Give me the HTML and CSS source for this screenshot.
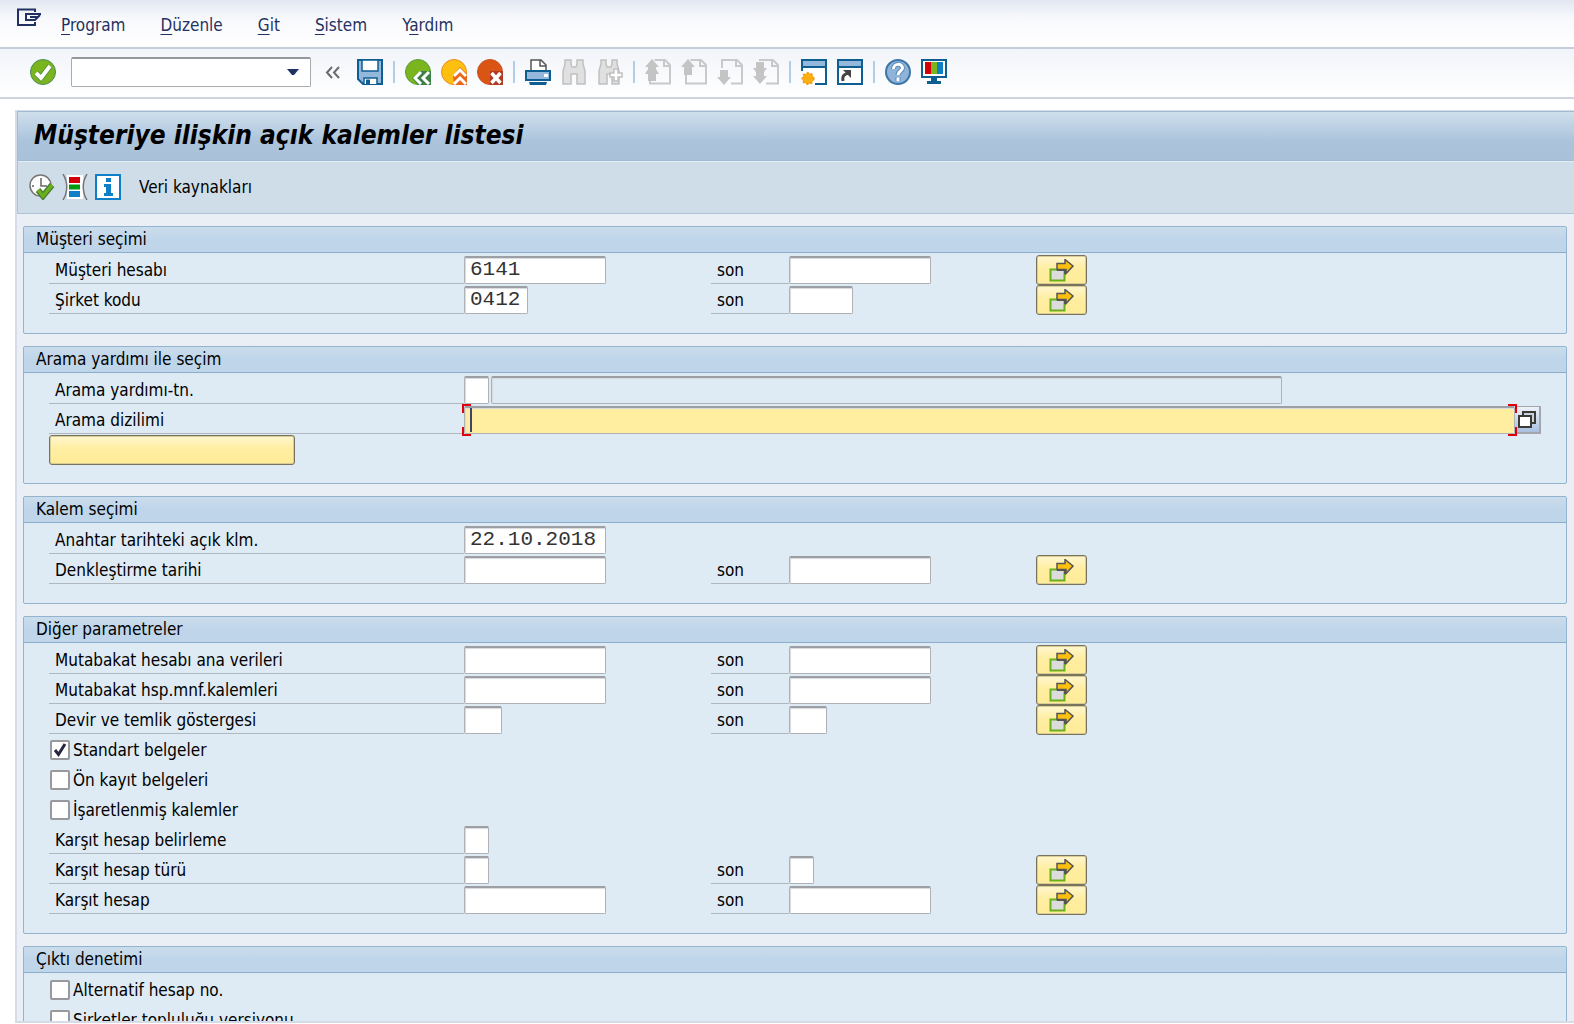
FILE: index.html
```html
<!DOCTYPE html>
<html lang="tr">
<head>
<meta charset="utf-8">
<title>Müşteriye ilişkin açık kalemler listesi</title>
<link rel="stylesheet" href="styles.css">
</head>
<body>
<svg class="defs" aria-hidden="true">
  <symbol id="i-multi" viewBox="0 0 26 24">
    <rect x="1.5" y="10.5" width="14" height="11" fill="#dcdcdc" stroke="#69b11b" stroke-width="2"/>
    <path d="M8 5h8V1l8 6.500-7 7.500v-4H8z" fill="#fcc10f" stroke="#555" stroke-width="1.500" transform="translate(0 -.5)"/>
    <path d="M8 11h8v4" fill="none" stroke="#555" stroke-width="2"/>
  </symbol>
  <symbol id="i-page" viewBox="0 0 26 26">
    <path d="M9.500 1H20l5 5v18.500H5V13" fill="none" stroke="#c9c9c9" stroke-width="2"/>
    <path d="M19 1v6h6" fill="none" stroke="#c9c9c9" stroke-width="2"/>
  </symbol>
</svg>

<nav class="menubar">
  <svg class="menu-logo" viewBox="0 0 24 20" width="24" height="20" fill="none" stroke="#1f3263" stroke-width="2"><path d="M18 4V1.500H1V17h17v-3M9 6h15M9 5v7h9l5-5M13 9h8"/></svg>
  <a href="#"><u>P</u>rogram</a>
  <a href="#"><u>D</u>üzenle</a>
  <a href="#"><u>G</u>it</a>
  <a href="#"><u>S</u>istem</a>
  <a href="#">Y<u>a</u>rdım</a>
</nav>

<div class="toolbar">
  <button class="tool tool-enter" aria-label="Devam">
    <svg viewBox="0 0 26 26"><circle cx="13" cy="13" r="12.500" fill="#7ab51d" stroke="#4b8a55"/><path d="M6 14l5 5L20 7" fill="none" stroke="#4b8a35" stroke-width="5.500"/><path d="M6 14l5 5L20 7" fill="none" stroke="#fff" stroke-width="4"/></svg>
  </button>
  <div class="command">
    <input type="text" aria-label="Komut alanı">
    <button aria-label="Komut listesi"><svg viewBox="0 0 12 7" width="12" height="7"><path d="M0 0h12L7 6H5z" fill="#1f3263"/></svg></button>
  </div>
  <button class="tool" aria-label="Daralt">
    <svg viewBox="0 0 26 26" fill="none" stroke="#6b6b6b" stroke-width="2"><path d="M11 8l-5 5.500 5 5.500M18 8l-5 5.500 5 5.500"/></svg>
  </button>
  <button class="tool" aria-label="Kaydet">
    <svg viewBox="0 0 26 26"><path d="M1 1h24v24H6l-5-5z" fill="#94b8dc" stroke="#0f5e92" stroke-width="2"/><path d="M5 1h16v11H5z" fill="#fff" stroke="#0f5e92" stroke-width="1.500"/><path d="M7 25v-6h13v6" fill="#fff" stroke="#0f5e92" stroke-width="1.500"/><path d="M9 20.500h4V25H9z" fill="#0f5e92"/></svg>
  </button>
  <span class="sep"></span>
  <button class="tool" aria-label="Geri">
    <svg viewBox="0 0 26 26"><circle cx="13" cy="13" r="12.500" fill="#7ab51d" stroke="#5b9a3c"/><path d="M15 12h11v14H13L7 19z" fill="#3f8046"/><path d="M16 13l-6 6 6 6M24 13l-6 6 6 6" fill="none" stroke="#fff" stroke-width="3"/></svg>
  </button>
  <button class="tool" aria-label="Çıkış">
    <svg viewBox="0 0 26 26"><circle cx="13" cy="13" r="12.500" fill="#fdc010" stroke="#ee8a1c"/><path d="M12 16l7-8 7 7v11H13z" fill="#e8681b"/><path d="M13 17l6-6 6 6M13 25l6-6 6 6" fill="none" stroke="#fff" stroke-width="3"/></svg>
  </button>
  <button class="tool" aria-label="İptal">
    <svg viewBox="0 0 26 26"><circle cx="13" cy="13" r="12.500" fill="#da5513" stroke="#c9501f"/><path d="M13 12h13v14H13z" fill="#b03a22"/><path d="M14.500 14l9 10M23.500 14l-9 10" stroke="#fff" stroke-width="3.500"/></svg>
  </button>
  <span class="sep"></span>
  <button class="tool" aria-label="Yazdır">
    <svg viewBox="0 0 26 26"><path d="M6 11V1h10l5 5v5" fill="#fff" stroke="#555" stroke-width="1.500"/><path d="M15 1v6h6" fill="none" stroke="#555" stroke-width="1.500"/><rect x="1" y="12" width="24" height="9" fill="#94b8dc" stroke="#0f5e92" stroke-width="2"/><rect x="19" y="15" width="4" height="3" fill="#fff"/><path d="M4 23h18l-1 3H5z" fill="#0f5e92"/></svg>
  </button>
  <button class="tool" aria-label="Bul" disabled>
    <svg viewBox="0 0 26 26" fill="#e0e0e0" stroke="#c0c0c0" stroke-width="1.500"><path d="M4 1h6v4l1 3h4l1-3V1h6v4l2 7v13h-8V15h-6v10H2V12l2-7z"/></svg>
  </button>
  <button class="tool" aria-label="Devamını bul" disabled>
    <svg viewBox="0 0 26 26" fill="#e0e0e0" stroke="#c0c0c0" stroke-width="1.500"><path d="M4 1h5v4l1 3h4l1-3V1h5v4l2 7v13h-7V15h-5v10H2V12l2-7z"/><path d="M17 10h4v4h4v4h-4v4h-4v-4h-4v-4h4z" fill="#fff"/></svg>
  </button>
  <span class="sep"></span>
  <button class="tool" aria-label="İlk sayfa" disabled>
    <svg viewBox="0 0 26 26"><use href="#i-page"/><path d="M7 0l7 8h-3v2l3 5h-3v7H3v-7H0l3-5V8H0z" fill="#c4c4c4"/></svg>
  </button>
  <button class="tool" aria-label="Önceki sayfa" disabled>
    <svg viewBox="0 0 26 26"><use href="#i-page"/><path d="M7 0l7 8h-3v8H3V8H0z" fill="#c4c4c4"/></svg>
  </button>
  <button class="tool" aria-label="Sonraki sayfa" disabled>
    <svg viewBox="0 0 26 26"><path d="M5 9V1h15l5 5v18.500H14M19 1v6h6" fill="none" stroke="#c9c9c9" stroke-width="2"/><path d="M3 11h8v7h3l-7 8-7-8h3z" fill="#c4c4c4"/></svg>
  </button>
  <button class="tool" aria-label="Son sayfa" disabled>
    <svg viewBox="0 0 26 26"><path d="M6 1h14l5 5v18.500H13M19 1v6h6" fill="none" stroke="#c9c9c9" stroke-width="2"/><path d="M3 3h8v6h3l-3 4v4h3l-7 8-7-8h3v-4L0 9h3z" fill="#c4c4c4"/></svg>
  </button>
  <span class="sep"></span>
  <button class="tool" aria-label="Yeni oturum">
    <svg viewBox="0 0 26 26"><path d="M1 12V1h24v24H14" fill="#fff" stroke="#0f5e92" stroke-width="2"/><path d="M2 2h22v5H2z" fill="#94b8dc"/><path d="M1 8h24" stroke="#0f5e92" stroke-width="2"/><circle cx="7" cy="19.500" r="5.500" fill="#fdb010" stroke="#ee9a1c" stroke-width="2" stroke-dasharray="2 2"/><circle cx="7" cy="19.500" r="4.500" fill="#fdb010"/></svg>
  </button>
  <button class="tool" aria-label="Kısayol oluştur">
    <svg viewBox="0 0 26 26"><rect x="1" y="1" width="24" height="24" fill="#fff" stroke="#0f5e92" stroke-width="2"/><path d="M2 2h22v5H2z" fill="#94b8dc"/><path d="M1 8h24" stroke="#0f5e92" stroke-width="2"/><path d="M6 22c-1-5 1-7 6-8" fill="none" stroke="#444" stroke-width="3"/><path d="M6 11h8v8z" fill="#444"/></svg>
  </button>
  <span class="sep"></span>
  <button class="tool" aria-label="Yardım">
    <svg viewBox="0 0 26 26"><circle cx="13" cy="13" r="12" fill="#8fb3d9" stroke="#3b76a8" stroke-width="2"/><path d="M8.500 10c0-6 9-6 9-1 0 3-4.500 3-4.500 7M13 18.500v3.500" fill="none" stroke="#5a8ab8" stroke-width="5"/><path d="M8.500 10c0-6 9-6 9-1 0 3-4.500 3-4.500 7M13 18.500v3.500" fill="none" stroke="#fff" stroke-width="3"/></svg>
  </button>
  <button class="tool" aria-label="Yerel düzeni uyarla">
    <svg viewBox="0 0 26 26"><rect x="1" y="1" width="24" height="17" fill="#fff" stroke="#0f5e92" stroke-width="2"/><path d="M4 3h6v12H4z" fill="#d3000a"/><path d="M10 3h6v12h-6z" fill="#7ab51d"/><path d="M16 3h6v12h-6z" fill="#0f80c8"/><path d="M10 19h6v3h4v3H6v-3h4z" fill="#0f5e92"/></svg>
  </button>
</div>

<main class="screen">
  <h1>Müşteriye ilişkin açık kalemler listesi</h1>
  <div class="app-toolbar">
    <button class="tool" aria-label="Yürüt">
      <svg viewBox="0 0 26 26"><circle cx="11.500" cy="11.500" r="10.500" fill="#fff" stroke="#777" stroke-width="1.500"/><path d="M12 4v8h6M12 18v3M3 12h2" fill="none" stroke="#666" stroke-width="1.500"/><path d="M9 16l5 6 9-11" fill="none" stroke="#4b7a35" stroke-width="6"/><path d="M9 16l5 6 9-11" fill="none" stroke="#69b11b" stroke-width="3.500"/></svg>
    </button>
    <button class="tool" aria-label="Seçenekler">
      <svg viewBox="0 0 26 26"><path d="M5 1h16v24H5z" fill="#fff"/><path d="M7 3h11v6H7z" fill="#d3000a"/><path d="M7 10.500h11v5H7z" fill="#009a10"/><path d="M7 17h11v6H7z" fill="#0f80c8"/><path d="M1 0c5 8 5 18 0 26M25 0c-5 8-5 18 0 26" fill="none" stroke="#777" stroke-width="1.500"/></svg>
    </button>
    <button class="tool" aria-label="Bilgi">
      <svg viewBox="0 0 26 26"><rect x="1" y="1" width="24" height="24" fill="#fff" stroke="#0f80c8" stroke-width="2"/><path d="M11 4h5v4h-5zM9 10h7v9h2v3H9v-3h2v-6H9z" fill="#0f80c8"/></svg>
    </button>
    <button class="text-button">Veri kaynakları</button>
  </div>

  <form class="content">
    <fieldset class="group">
      <legend>Müşteri seçimi</legend>
      <div class="row">
        <label class="name" for="kunnr">Müşteri hesabı</label><input class="field w10" id="kunnr" value="6141">
        <label class="name to" for="kunnr2">son</label><input class="field w10" id="kunnr2">
        <button type="button" class="multi" aria-label="Çoklu seçim"><svg><use href="#i-multi"/></svg></button>
      </div>
      <div class="row">
        <label class="name" for="bukrs">Şirket kodu</label><input class="field w4" id="bukrs" value="0412">
        <label class="name to" for="bukrs2">son</label><input class="field w4" id="bukrs2">
        <button type="button" class="multi" aria-label="Çoklu seçim"><svg><use href="#i-multi"/></svg></button>
      </div>
    </fieldset>

    <fieldset class="group">
      <legend>Arama yardımı ile seçim</legend>
      <div class="row wide">
        <label class="name" for="help">Arama yardımı-tn.</label>
        <div class="line"><input class="field w1" id="help"><input class="field readonly" aria-label="Arama yardımı tanımı" readonly></div>
      </div>
      <div class="row wide">
        <label class="name" for="string">Arama dizilimi</label>
        <div class="line search">
          <div class="focus"><input class="field active" id="string"></div>
          <button type="button" class="match" aria-label="Giriş yardımı"><svg viewBox="0 0 20 20" width="20" height="20" stroke="#3c3a36" stroke-width="2"><path d="M6 2h12v11H6z" fill="#c6d3e0"/><path d="M2 6h12v11H2z" fill="#fff"/></svg></button>
        </div>
      </div>
      <div class="row"><button type="button" class="wide-button" aria-label="Arama yardımı"></button></div>
    </fieldset>

    <fieldset class="group">
      <legend>Kalem seçimi</legend>
      <div class="row">
        <label class="name" for="stida">Anahtar tarihteki açık klm.</label><input class="field w10" id="stida" value="22.10.2018">
      </div>
      <div class="row">
        <label class="name" for="augdt">Denkleştirme tarihi</label><input class="field w10" id="augdt">
        <label class="name to" for="augdt2">son</label><input class="field w10" id="augdt2">
        <button type="button" class="multi" aria-label="Çoklu seçim"><svg><use href="#i-multi"/></svg></button>
      </div>
    </fieldset>

    <fieldset class="group">
      <legend>Diğer parametreler</legend>
      <div class="row">
        <label class="name" for="akonts">Mutabakat hesabı ana verileri</label><input class="field w10" id="akonts">
        <label class="name to" for="akonts2">son</label><input class="field w10" id="akonts2">
        <button type="button" class="multi" aria-label="Çoklu seçim"><svg><use href="#i-multi"/></svg></button>
      </div>
      <div class="row">
        <label class="name" for="akontp">Mutabakat hsp.mnf.kalemleri</label><input class="field w10" id="akontp">
        <label class="name to" for="akontp2">son</label><input class="field w10" id="akontp2">
        <button type="button" class="multi" aria-label="Çoklu seçim"><svg><use href="#i-multi"/></svg></button>
      </div>
      <div class="row">
        <label class="name" for="cession">Devir ve temlik göstergesi</label><input class="field w2" id="cession">
        <label class="name to" for="cession2">son</label><input class="field w2" id="cession2">
        <button type="button" class="multi" aria-label="Çoklu seçim"><svg><use href="#i-multi"/></svg></button>
      </div>
      <label class="check"><input type="checkbox" checked>Standart belgeler</label>
      <label class="check"><input type="checkbox">Ön kayıt belgeleri</label>
      <label class="check"><input type="checkbox">İşaretlenmiş kalemler</label>
      <div class="row">
        <label class="name" for="gkdet">Karşıt hesap belirleme</label><input class="field w1" id="gkdet">
      </div>
      <div class="row">
        <label class="name" for="gkart">Karşıt hesap türü</label><input class="field w1" id="gkart">
        <label class="name to" for="gkart2">son</label><input class="field w1" id="gkart2">
        <button type="button" class="multi" aria-label="Çoklu seçim"><svg><use href="#i-multi"/></svg></button>
      </div>
      <div class="row">
        <label class="name" for="gkont">Karşıt hesap</label><input class="field w10" id="gkont">
        <label class="name to" for="gkont2">son</label><input class="field w10" id="gkont2">
        <button type="button" class="multi" aria-label="Çoklu seçim"><svg><use href="#i-multi"/></svg></button>
      </div>
    </fieldset>

    <fieldset class="group">
      <legend>Çıktı denetimi</legend>
      <label class="check"><input type="checkbox">Alternatif hesap no.</label>
      <label class="check"><input type="checkbox">Şirketler topluluğu versiyonu</label>
    </fieldset>
  </form>
</main>
</body>
</html>
```
FILE: styles.css
```css
* { box-sizing: border-box; }

body {
  margin: 0;
  height: 100vh;
  display: flex;
  flex-direction: column;
  overflow: hidden;
  background: #fff;
  color: #000;
  font: 17px/20px "DejaVu Sans Condensed", "Noto Sans", sans-serif;
}

button, input {
  margin: 0;
  padding: 0;
  border: 0;
  border-radius: 0;
  outline: 0;
  background: none;
  font: inherit;
  color: inherit;
}

.defs { display: none; }

/* Menu bar */
.menubar {
  flex: none;
  display: flex;
  align-items: center;
  gap: 35px;
  height: 49px;
  padding: 2px 0 0 17px;
  border-bottom: 2px solid #c6cedb;
  background: linear-gradient(#e1e7f1, #f8f9fc 40%, #fff);
}
.menubar a { color: #1f3263; text-decoration: none; }
.menubar u { text-underline-offset: 3px; }
.menu-logo { margin: 0 -15px 14px 0; }

/* Standard toolbar */
.toolbar {
  flex: none;
  display: flex;
  align-items: center;
  gap: 10px;
  height: 50px;
  padding: 0 0 2px 30px;
  border-bottom: 2px solid #cdd4de;
  background: linear-gradient(#f1f4f9, #fff);
}
.tool { width: 26px; height: 26px; }
.tool svg { display: block; width: 26px; height: 26px; }
.tool-enter { margin-right: 5px; }
.sep { width: 2px; height: 22px; background: #b4cde6; }

.command {
  display: flex;
  width: 240px;
  height: 30px;
  border: 1px solid #a9abae;
  border-top: 2px solid #94979b;
  border-radius: 2px;
  background: #fff;
}
.command input { flex: 1; min-width: 0; padding-left: 4px; }
.command button { width: 34px; }
.command svg { display: block; margin: auto; }

/* Screen frame */
.screen {
  flex: 1;
  min-height: 0;
  display: flex;
  flex-direction: column;
  margin: 11px 0 1px 15px;
  border: solid #d5dbe7;
  border-width: 1px 0 2px 2px;
  background: #e9eff5;
}
h1 {
  flex: none;
  margin: 0;
  height: 50px;
  padding-left: 16px;
  border: 1px solid #a0bbd3;
  border-right: 0;
  background: linear-gradient(#cfdfec, #abc4dc 60%, #a9c2da);
  font: italic bold 26px/46px "DejaVu Sans Condensed", "Noto Sans", sans-serif;
}
.app-toolbar {
  flex: none;
  display: flex;
  align-items: center;
  gap: 7px;
  height: 53px;
  padding: 0 0 1px 11px;
  border: solid #b0c3d6;
  border-width: 0 0 1px 1px;
  background: #cfdde8;
  box-shadow: inset 0 1px #e3ecf3;
}
.text-button { margin-left: 11px; }

/* Selection groups */
.content {
  flex: 1;
  min-height: 0;
  overflow: hidden;
  padding: 12px 7px 0 6px;
}
.group {
  margin: 0 0 12px;
  padding: 3px 25px 18px;
  min-width: 0;
  border: 1px solid #93b3cf;
  border-radius: 2px;
  background: #deeaf4;
}
.group legend {
  float: left;
  width: calc(100% + 50px);
  height: 26px;
  margin: -3px -25px 2px;
  padding-left: 12px;
  border-bottom: 1px solid #8cadcc;
  background: linear-gradient(#cbddec, #bfd5ea 50%);
  line-height: 24px;
}
.group legend ~ * { clear: both; }

.row {
  display: grid;
  grid-template-columns: 415px 247px 78px 247px 51px;
  height: 30px;
}
.wide { grid-template-columns: 415px 1fr; }
.name {
  height: 29px;
  padding: 0 6px;
  border-bottom: 1px solid #b0b7bd;
  line-height: 30px;
}
.line { display: flex; gap: 2px; }

.field {
  height: 28px;
  margin-top: 1px;
  padding: 0 5px 2px;
  border: 1px solid #aeb2b6;
  border-top: 2px solid #9c9fa3;
  border-radius: 2px;
  background: #fff;
  box-shadow: inset 1px 1px 1px #d8dade;
  color: #333;
  font: 21px/23px "Liberation Mono", monospace;
}
.w1 { width: 25px; }
.w2 { width: 38px; }
.w4 { width: 64px; }
.w10 { width: 142px; }
.readonly { width: 791px; background: #deeaf4; }
.search { gap: 0; }
.focus { position: relative; flex: 1; display: flex; }
.active { flex: 1; min-width: 0; background: #ffee9f; }
/* Red corner marks round the focused field, and its caret */
.focus::after {
  content: "";
  position: absolute;
  inset: -1px -2px -1px -2px;
  background:
    linear-gradient(#e2000f, #e2000f) 0 0 / 9px 2px,
    linear-gradient(#e2000f, #e2000f) 0 0 / 2px 9px,
    linear-gradient(#e2000f, #e2000f) 100% 0 / 9px 2px,
    linear-gradient(#e2000f, #e2000f) 100% 0 / 2px 9px,
    linear-gradient(#e2000f, #e2000f) 0 100% / 9px 2px,
    linear-gradient(#e2000f, #e2000f) 0 100% / 2px 9px,
    linear-gradient(#e2000f, #e2000f) 100% 100% / 9px 2px,
    linear-gradient(#e2000f, #e2000f) 100% 100% / 2px 9px,
    linear-gradient(#3d4270, #3d4270) 8px 50% / 2px 24px;
  background-repeat: no-repeat;
  pointer-events: none;
}
.match {
  width: 26px;
  height: 28px;
  margin-top: 1px;
  border: solid #a3a7ad;
  border-width: 1px 2px 2px 0;
  background: linear-gradient(#eef2f8, #a9bfe0);
}
.match svg { display: block; margin: auto; }

.multi, .wide-button {
  height: 30px;
  border: 1px solid #77735f;
  border-radius: 3px;
  background: linear-gradient(#fff6cf, #ffeea2 45%, #ffec98);
  box-shadow: inset 0 0 0 1px #d9cd94;
}
.multi svg { display: block; width: 26px; height: 24px; margin: 1px auto 0; }
.wide-button { width: 246px; }

.check { display: flex; align-items: center; gap: 3px; height: 30px; padding-left: 1px; }
.check input {
  appearance: none;
  width: 20px;
  height: 20px;
  border: 2px solid #97999c;
  border-radius: 2px;
  background: #fff;
}
.check input:checked {
  background: #fff url("data:image/svg+xml,%3Csvg xmlns='http://www.w3.org/2000/svg' viewBox='0 0 16 16'%3E%3Cpath d='M3 8l3.500 4.500L13 2' fill='none' stroke='%23262642' stroke-width='3'/%3E%3C/svg%3E") center / 16px no-repeat;
}
```
